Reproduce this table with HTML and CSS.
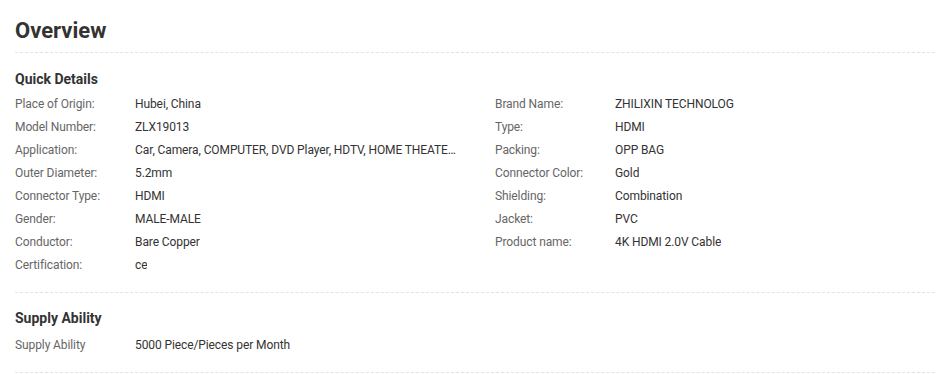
FILE: index.html
```html
<!DOCTYPE html>
<html>
<head>
<meta charset="utf-8">
<link rel="stylesheet" href="styles.css">
</head>
<body>
<div class="overview">
  <h2 class="title">Overview</h2>
  <section class="block">
    <h3 class="block-title">Quick Details</h3>
    <div class="grid">
      <div class="col">
        <div class="row"><span class="label">Place of Origin:</span><span class="value">Hubei, China</span></div>
        <div class="row"><span class="label">Model Number:</span><span class="value">ZLX19013</span></div>
        <div class="row"><span class="label">Application:</span><span class="value">Car, Camera, COMPUTER, DVD Player, HDTV, HOME THEATER, Monitor, Multimedia, Projector</span></div>
        <div class="row"><span class="label">Outer Diameter:</span><span class="value">5.2mm</span></div>
        <div class="row"><span class="label">Connector Type:</span><span class="value">HDMI</span></div>
        <div class="row"><span class="label">Gender:</span><span class="value">MALE-MALE</span></div>
        <div class="row"><span class="label">Conductor:</span><span class="value">Bare Copper</span></div>
        <div class="row"><span class="label">Certification:</span><span class="value">ce</span></div>
      </div>
      <div class="col">
        <div class="row"><span class="label">Brand Name:</span><span class="value">ZHILIXIN TECHNOLOG</span></div>
        <div class="row"><span class="label">Type:</span><span class="value">HDMI</span></div>
        <div class="row"><span class="label">Packing:</span><span class="value">OPP BAG</span></div>
        <div class="row"><span class="label">Connector Color:</span><span class="value">Gold</span></div>
        <div class="row"><span class="label">Shielding:</span><span class="value">Combination</span></div>
        <div class="row"><span class="label">Jacket:</span><span class="value">PVC</span></div>
        <div class="row"><span class="label">Product name:</span><span class="value">4K HDMI 2.0V Cable</span></div>
      </div>
    </div>
  </section>
  <section class="block block--supply">
    <h3 class="block-title block-title--spaced">Supply Ability</h3>
    <div class="col">
      <div class="row"><span class="label">Supply Ability</span><span class="value">5000 Piece/Pieces per Month</span></div>
    </div>
  </section>
</div>
</body>
</html>
```

FILE: styles.css
```css
html, body {
  margin: 0;
  padding: 0;
  background: #fff;
}
body {
  font-family: Roboto, "Liberation Sans", sans-serif;
  color: #333;
}
.overview {
  width: 920px;
  margin-left: 15px;
}
.title {
  margin: 0;
  padding-top: 18px;
  font-size: 22px;
  line-height: 26px;
  font-weight: 700;
  color: #333;
  padding-bottom: 8px;
  border-bottom: 1px dashed #e3e3e3;
}
.block {
  border-bottom: 1px dashed #e3e3e3;
  padding-top: 17px;
  padding-bottom: 15px;
}
.block--supply {
  padding-top: 16px;
}
.block-title {
  margin: 0 0 5px;
  font-size: 14px;
  line-height: 18px;
  font-weight: 700;
  color: #333;
}
.block-title--spaced {
  margin-bottom: 7px;
}
.grid {
  display: grid;
  grid-template-columns: 480px 1fr;
}
.row {
  display: flex;
  font-size: 12px;
  line-height: 15px;
  letter-spacing: -0.1px;
  padding: 4px 0;
  height: 15px;
}
.label {
  width: 120px;
  flex: none;
  color: #666;
}
.value {
  color: #333;
  max-width: 326px;
  white-space: nowrap;
  overflow: hidden;
  text-overflow: ellipsis;
}
```
